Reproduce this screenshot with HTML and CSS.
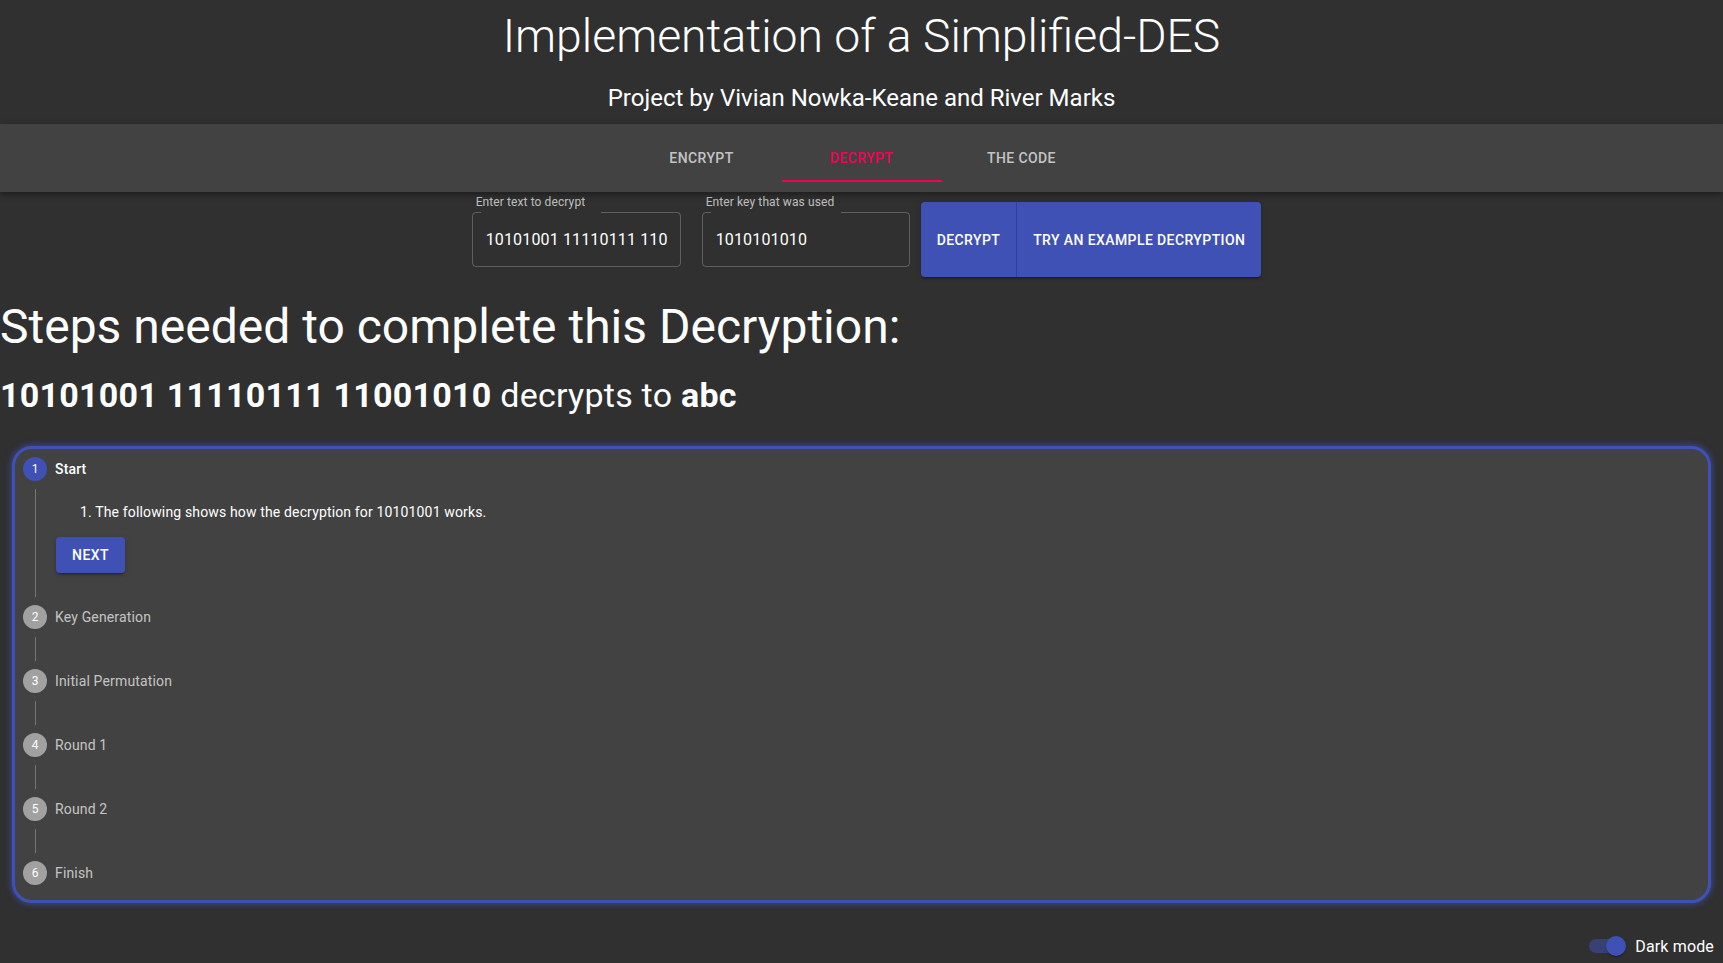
FILE: index.html
```html
<!DOCTYPE html>
<html lang="en">
<head>
<meta charset="utf-8">
<title>Simplified-DES</title>
<link rel="stylesheet" href="styles.css">
</head>
<body>
<header class="header">
  <h1 class="title">Implementation of a Simplified-DES</h1>
  <h2 class="subtitle">Project by Vivian Nowka-Keane and River Marks</h2>
</header>
<nav class="tabbar">
  <div class="tabs">
    <div class="tab">Encrypt</div>
    <div class="tab tab-active">Decrypt</div>
    <div class="tab">The Code</div>
  </div>
</nav>
<section class="form-row">
  <div class="field field-a">
    <div class="field-label">Enter text to decrypt</div>
    <div class="field-box">
      <span class="notch notch-a"></span>
      <span class="field-value">10101001 11110111 110</span>
    </div>
  </div>
  <div class="field field-b">
    <div class="field-label">Enter key that was used</div>
    <div class="field-box">
      <span class="notch notch-b"></span>
      <span class="field-value">1010101010</span>
    </div>
  </div>
  <div class="btn-group">
    <div class="btn btn-first">Decrypt</div>
    <div class="btn">Try an example decryption</div>
  </div>
</section>
<h3 class="steps-heading">Steps needed to complete this Decryption:</h3>
<h4 class="result"><b>10101001 11110111 11001010</b> decrypts to <b>abc</b></h4>
<section class="card">
  <div class="step">
    <div class="step-label">
      <span class="step-icon step-icon-active">1</span>
      <span class="step-text step-text-active">Start</span>
    </div>
    <div class="step-content">
      <p class="step-desc">1. The following shows how the decryption for 10101001 works.</p>
      <div class="next-btn">Next</div>
    </div>
  </div>
  <div class="step">
    <div class="step-label">
      <span class="step-icon">2</span>
      <span class="step-text">Key Generation</span>
    </div>
  </div>
  <div class="connector"></div>
  <div class="step">
    <div class="step-label">
      <span class="step-icon">3</span>
      <span class="step-text">Initial Permutation</span>
    </div>
  </div>
  <div class="connector"></div>
  <div class="step">
    <div class="step-label">
      <span class="step-icon">4</span>
      <span class="step-text">Round 1</span>
    </div>
  </div>
  <div class="connector"></div>
  <div class="step">
    <div class="step-label">
      <span class="step-icon">5</span>
      <span class="step-text">Round 2</span>
    </div>
  </div>
  <div class="connector"></div>
  <div class="step">
    <div class="step-label">
      <span class="step-icon">6</span>
      <span class="step-text">Finish</span>
    </div>
  </div>
</section>
<footer class="toggle-row">
  <div class="switch">
    <span class="switch-track"></span>
    <span class="switch-thumb"></span>
  </div>
  <span class="toggle-label">Dark mode</span>
</footer>
</body>
</html>
```

FILE: styles.css
```css
* { box-sizing: border-box; }
html, body {
  margin: 0;
  padding: 0;
  background: #303030;
  color: #fff;
  font-family: Roboto, "Liberation Sans", Arial, sans-serif;
  overflow: hidden;
}
.header {
  text-align: center;
  padding-top: 8px;
}
.title {
  margin: 0;
  font-size: 46.3px;
  font-weight: 300;
  line-height: 56px;
}
.subtitle {
  margin: 18px 0 0;
  font-size: 24px;
  font-weight: 400;
  line-height: 32px;
}
.tabbar {
  margin-top: 10px;
  background: #424242;
  padding: 10px 0;
  box-shadow: 0 2px 4px -1px rgba(0,0,0,0.2), 0 4px 5px 0 rgba(0,0,0,0.14), 0 1px 10px 0 rgba(0,0,0,0.12);
  position: relative;
  z-index: 1;
}
.tabs {
  display: flex;
  justify-content: center;
  height: 48px;
}
.tab {
  width: 160px;
  display: flex;
  align-items: center;
  justify-content: center;
  font-size: 14px;
  font-weight: 500;
  letter-spacing: 0.4px;
  text-transform: uppercase;
  color: rgba(255,255,255,0.7);
}
.tab-active {
  color: #f50057;
  border-bottom: 2px solid #f50057;
  padding-top: 2px;
}
.form-row {
  display: flex;
  justify-content: center;
  align-items: flex-start;
  padding: 3px 0 0 10px;
}
.field { display: flex; flex-direction: column; }
.field-a { width: 209px; margin-right: 21px; }
.field-b { width: 208px; margin-right: 11px; }
.field-label {
  font-size: 12px;
  line-height: 14px;
  color: rgba(255,255,255,0.7);
  padding-left: 4px;
  letter-spacing: 0.1px;
}
.field-box {
  margin-top: 3px;
  height: 55px;
  border: 1px solid rgba(255,255,255,0.23);
  border-radius: 4px;
  display: flex;
  align-items: center;
  padding-left: 13px;
  position: relative;
}
.notch {
  position: absolute;
  top: -1px;
  left: 8px;
  height: 1px;
  background: #303030;
}
.notch-a { width: 120px; }
.notch-b { width: 130px; }
.field-value {
  font-size: 16px;
  letter-spacing: 0.15px;
  color: #fff;
  white-space: nowrap;
  overflow: hidden;
}
.btn-group {
  margin-top: 7px;
  height: 75px;
  display: flex;
  border-radius: 4px;
  background: #3f51b5;
  box-shadow: 0 3px 1px -2px rgba(0,0,0,0.2), 0 2px 2px 0 rgba(0,0,0,0.14), 0 1px 5px 0 rgba(0,0,0,0.12);
}
.btn {
  display: flex;
  align-items: center;
  padding: 0 16px;
  font-size: 14px;
  font-weight: 500;
  letter-spacing: 0.4px;
  text-transform: uppercase;
  color: #fff;
}
.btn-first { border-right: 1px solid #303f9f; }
.steps-heading {
  margin: 22px 0 0;
  font-size: 48px;
  font-weight: 400;
  line-height: 56px;
}
.result {
  margin: 19px 0 0;
  font-size: 34px;
  font-weight: 400;
  line-height: 42px;
  letter-spacing: 0.25px;
}
.result b { font-weight: 700; }
.card {
  margin: 30px 12px 0;
  height: 457px;
  border: 3px solid #3f51b5;
  border-radius: 20px;
  background: #424242;
  box-shadow: 0 0 6px 1px rgba(63,81,181,0.75);
  padding: 0 8px 8px;
}
.step-label {
  display: flex;
  align-items: center;
  height: 40px;
}
.step-icon {
  width: 24px;
  height: 24px;
  border-radius: 50%;
  background: rgba(255,255,255,0.5);
  color: #fff;
  font-size: 12px;
  display: flex;
  align-items: center;
  justify-content: center;
  margin-right: 8px;
}
.step-icon-active { background: #3f51b5; }
.step-text {
  font-size: 14px;
  letter-spacing: 0.15px;
  color: rgba(255,255,255,0.7);
}
.step-text-active { color: #fff; font-weight: 500; }
.step-content {
  margin-left: 12px;
  border-left: 1px solid #757575;
  padding: 13px 8px 24px 20px;
}
.step-desc {
  margin: 0;
  font-size: 14px;
  line-height: 20px;
  letter-spacing: 0.15px;
  padding-left: 24px;
}
.next-btn {
  margin-top: 15px;
  width: 69px;
  height: 36px;
  border-radius: 4px;
  background: #3f51b5;
  display: flex;
  align-items: center;
  justify-content: center;
  font-size: 14px;
  font-weight: 500;
  letter-spacing: 0.4px;
  text-transform: uppercase;
  box-shadow: 0 3px 1px -2px rgba(0,0,0,0.2), 0 2px 2px 0 rgba(0,0,0,0.14), 0 1px 5px 0 rgba(0,0,0,0.12);
}
.connector {
  margin-left: 12px;
  height: 24px;
  border-left: 1px solid #757575;
}
.toggle-row {
  margin-top: 24px;
  display: flex;
  justify-content: flex-end;
  align-items: center;
  height: 38px;
  padding-right: 9px;
}
.switch {
  position: relative;
  width: 58px;
  height: 38px;
}
.switch-track {
  position: absolute;
  left: 12px;
  top: 12px;
  width: 34px;
  height: 14px;
  border-radius: 7px;
  background: #3f51b5;
  opacity: 0.5;
}
.switch-thumb {
  position: absolute;
  left: 29px;
  top: 9px;
  width: 20px;
  height: 20px;
  border-radius: 50%;
  background: #3f51b5;
  box-shadow: 0 2px 1px -1px rgba(0,0,0,0.2), 0 1px 1px 0 rgba(0,0,0,0.14), 0 1px 3px 0 rgba(0,0,0,0.12);
}
.toggle-label {
  font-size: 16px;
  letter-spacing: 0.15px;
  color: #fff;
}
```
